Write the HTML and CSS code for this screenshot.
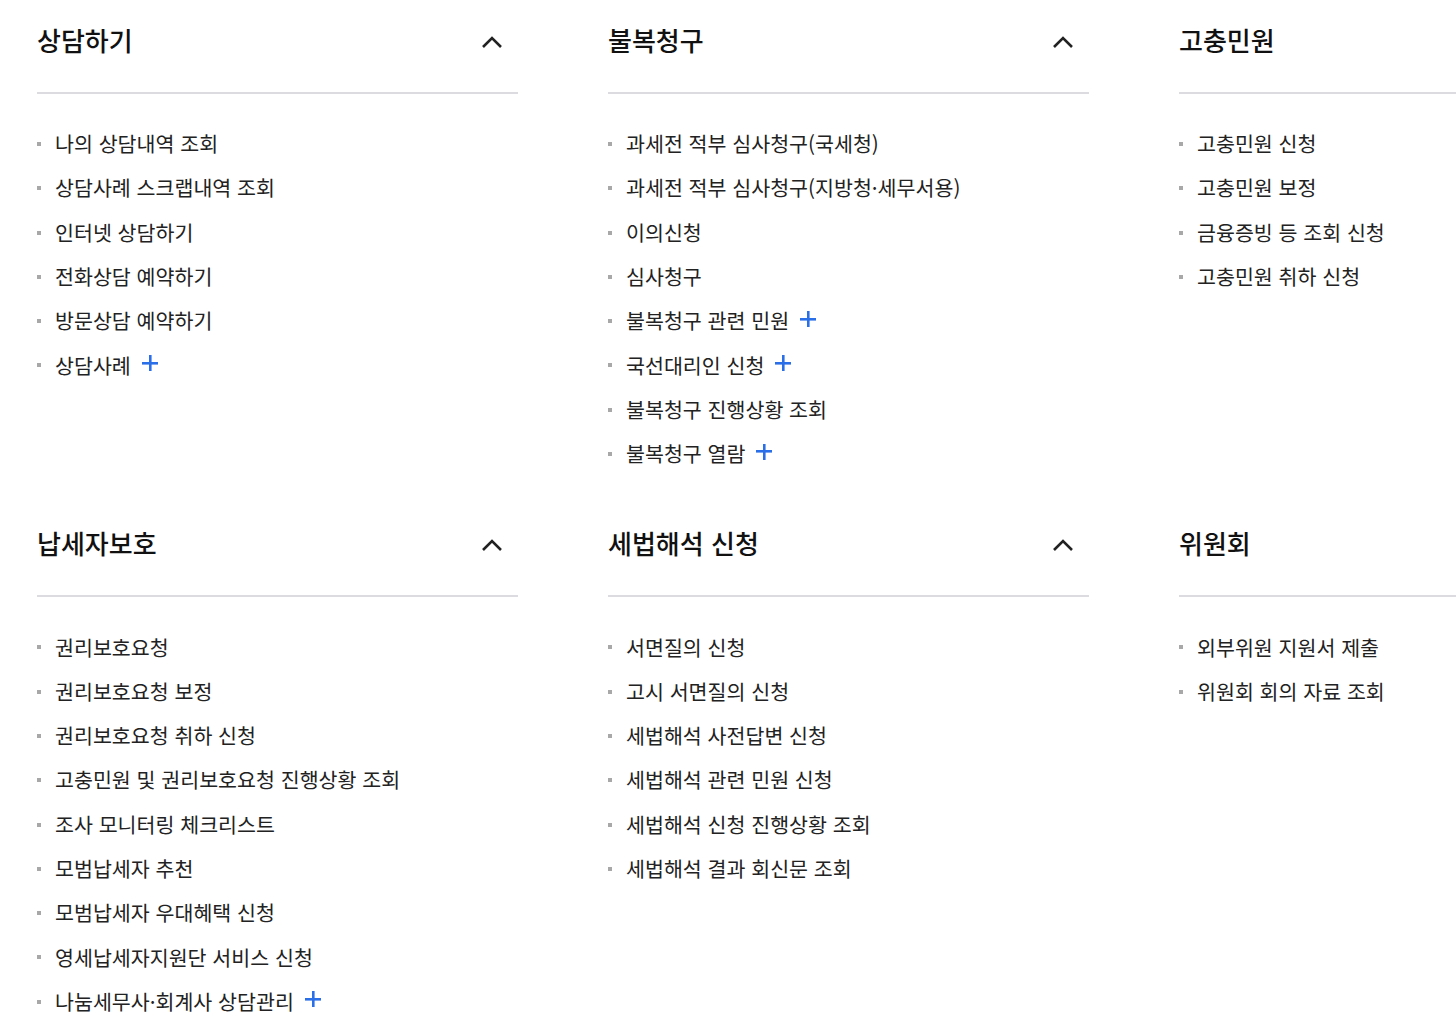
FILE: index.html
```html
<!DOCTYPE html>
<html lang="ko">
<head>
  <meta charset="UTF-8">
  <meta name="viewport" content="width=device-width, initial-scale=1.0">
  <title>민원 메뉴</title>
  <link rel="stylesheet" href="styles.css">
</head>
<body>
  <div class="menu">
    <!-- 1행 -->
    <section class="group">
      <div class="group-head">
        <h2>상담하기</h2>
        <span class="toggle"><svg viewBox="0 0 22 14" width="22" height="14"><path d="M2 12 L11 3 L20 12" fill="none" stroke="#222" stroke-width="2.6"/></svg></span>
      </div>
      <ul class="links">
        <li>나의 상담내역 조회</li>
        <li>상담사례 스크랩내역 조회</li>
        <li>인터넷 상담하기</li>
        <li>전화상담 예약하기</li>
        <li>방문상담 예약하기</li>
        <li class="more">상담사례</li>
      </ul>
    </section>

    <section class="group">
      <div class="group-head">
        <h2>불복청구</h2>
        <span class="toggle"><svg viewBox="0 0 22 14" width="22" height="14"><path d="M2 12 L11 3 L20 12" fill="none" stroke="#222" stroke-width="2.6"/></svg></span>
      </div>
      <ul class="links">
        <li>과세전 적부 심사청구(국세청)</li>
        <li>과세전 적부 심사청구(지방청·세무서용)</li>
        <li>이의신청</li>
        <li>심사청구</li>
        <li class="more">불복청구 관련 민원</li>
        <li class="more">국선대리인 신청</li>
        <li>불복청구 진행상황 조회</li>
        <li class="more">불복청구 열람</li>
      </ul>
    </section>

    <section class="group">
      <div class="group-head">
        <h2>고충민원</h2>
        <span class="toggle"><svg viewBox="0 0 22 14" width="22" height="14"><path d="M2 12 L11 3 L20 12" fill="none" stroke="#222" stroke-width="2.6"/></svg></span>
      </div>
      <ul class="links">
        <li>고충민원 신청</li>
        <li>고충민원 보정</li>
        <li>금융증빙 등 조회 신청</li>
        <li>고충민원 취하 신청</li>
      </ul>
    </section>

    <!-- 2행 -->
    <section class="group">
      <div class="group-head">
        <h2>납세자보호</h2>
        <span class="toggle"><svg viewBox="0 0 22 14" width="22" height="14"><path d="M2 12 L11 3 L20 12" fill="none" stroke="#222" stroke-width="2.6"/></svg></span>
      </div>
      <ul class="links">
        <li>권리보호요청</li>
        <li>권리보호요청 보정</li>
        <li>권리보호요청 취하 신청</li>
        <li>고충민원 및 권리보호요청 진행상황 조회</li>
        <li>조사 모니터링 체크리스트</li>
        <li>모범납세자 추천</li>
        <li>모범납세자 우대혜택 신청</li>
        <li>영세납세자지원단 서비스 신청</li>
        <li class="more">나눔세무사·회계사 상담관리</li>
      </ul>
    </section>

    <section class="group">
      <div class="group-head">
        <h2>세법해석 신청</h2>
        <span class="toggle"><svg viewBox="0 0 22 14" width="22" height="14"><path d="M2 12 L11 3 L20 12" fill="none" stroke="#222" stroke-width="2.6"/></svg></span>
      </div>
      <ul class="links">
        <li>서면질의 신청</li>
        <li>고시 서면질의 신청</li>
        <li>세법해석 사전답변 신청</li>
        <li>세법해석 관련 민원 신청</li>
        <li>세법해석 신청 진행상황 조회</li>
        <li>세법해석 결과 회신문 조회</li>
      </ul>
    </section>

    <section class="group">
      <div class="group-head">
        <h2>위원회</h2>
        <span class="toggle"><svg viewBox="0 0 22 14" width="22" height="14"><path d="M2 12 L11 3 L20 12" fill="none" stroke="#222" stroke-width="2.6"/></svg></span>
      </div>
      <ul class="links">
        <li>외부위원 지원서 제출</li>
        <li>위원회 회의 자료 조회</li>
      </ul>
    </section>
  </div>
</body>
</html>
```

FILE: styles.css
```css
* {
  box-sizing: border-box;
  margin: 0;
  padding: 0;
}

html, body {
  overflow: hidden;
}

body {
  font-family: "Noto Sans CJK KR", "Noto Sans", sans-serif;
  background: #fff;
  color: #222;
}

.menu {
  display: grid;
  grid-template-columns: repeat(3, 481px);
  column-gap: 90px;
  row-gap: 28px;
  padding-left: 37px;
  width: 1700px;
}

.group-head {
  display: flex;
  align-items: center;
  justify-content: space-between;
  height: 94px;
  padding: 21px 15px 33px 0;
  border-bottom: 2px solid #dcdce0;
}

.group-head h2 {
  font-size: 26px;
  font-weight: 500;
  line-height: 38px;
  color: #111;
}

.toggle {
  display: flex;
  margin-top: 3px;
}

.links {
  list-style: none;
  padding-top: 27px;
}

.links li {
  position: relative;
  display: flex;
  align-items: center;
  height: 44.3px;
  padding-left: 18px;
  font-size: 20.6px;
  color: #222;
}

.links li::before {
  content: "";
  position: absolute;
  left: 0;
  top: 21px;
  width: 4px;
  height: 4px;
  background: #a8a8a8;
}

.links li.more::after {
  content: "";
  width: 16px;
  height: 16px;
  margin-left: 11px;
  margin-top: -3px;
  background:
    linear-gradient(#2b6fe8, #2b6fe8) center / 16px 2.6px no-repeat,
    linear-gradient(#2b6fe8, #2b6fe8) center / 2.6px 16px no-repeat;
}
```
